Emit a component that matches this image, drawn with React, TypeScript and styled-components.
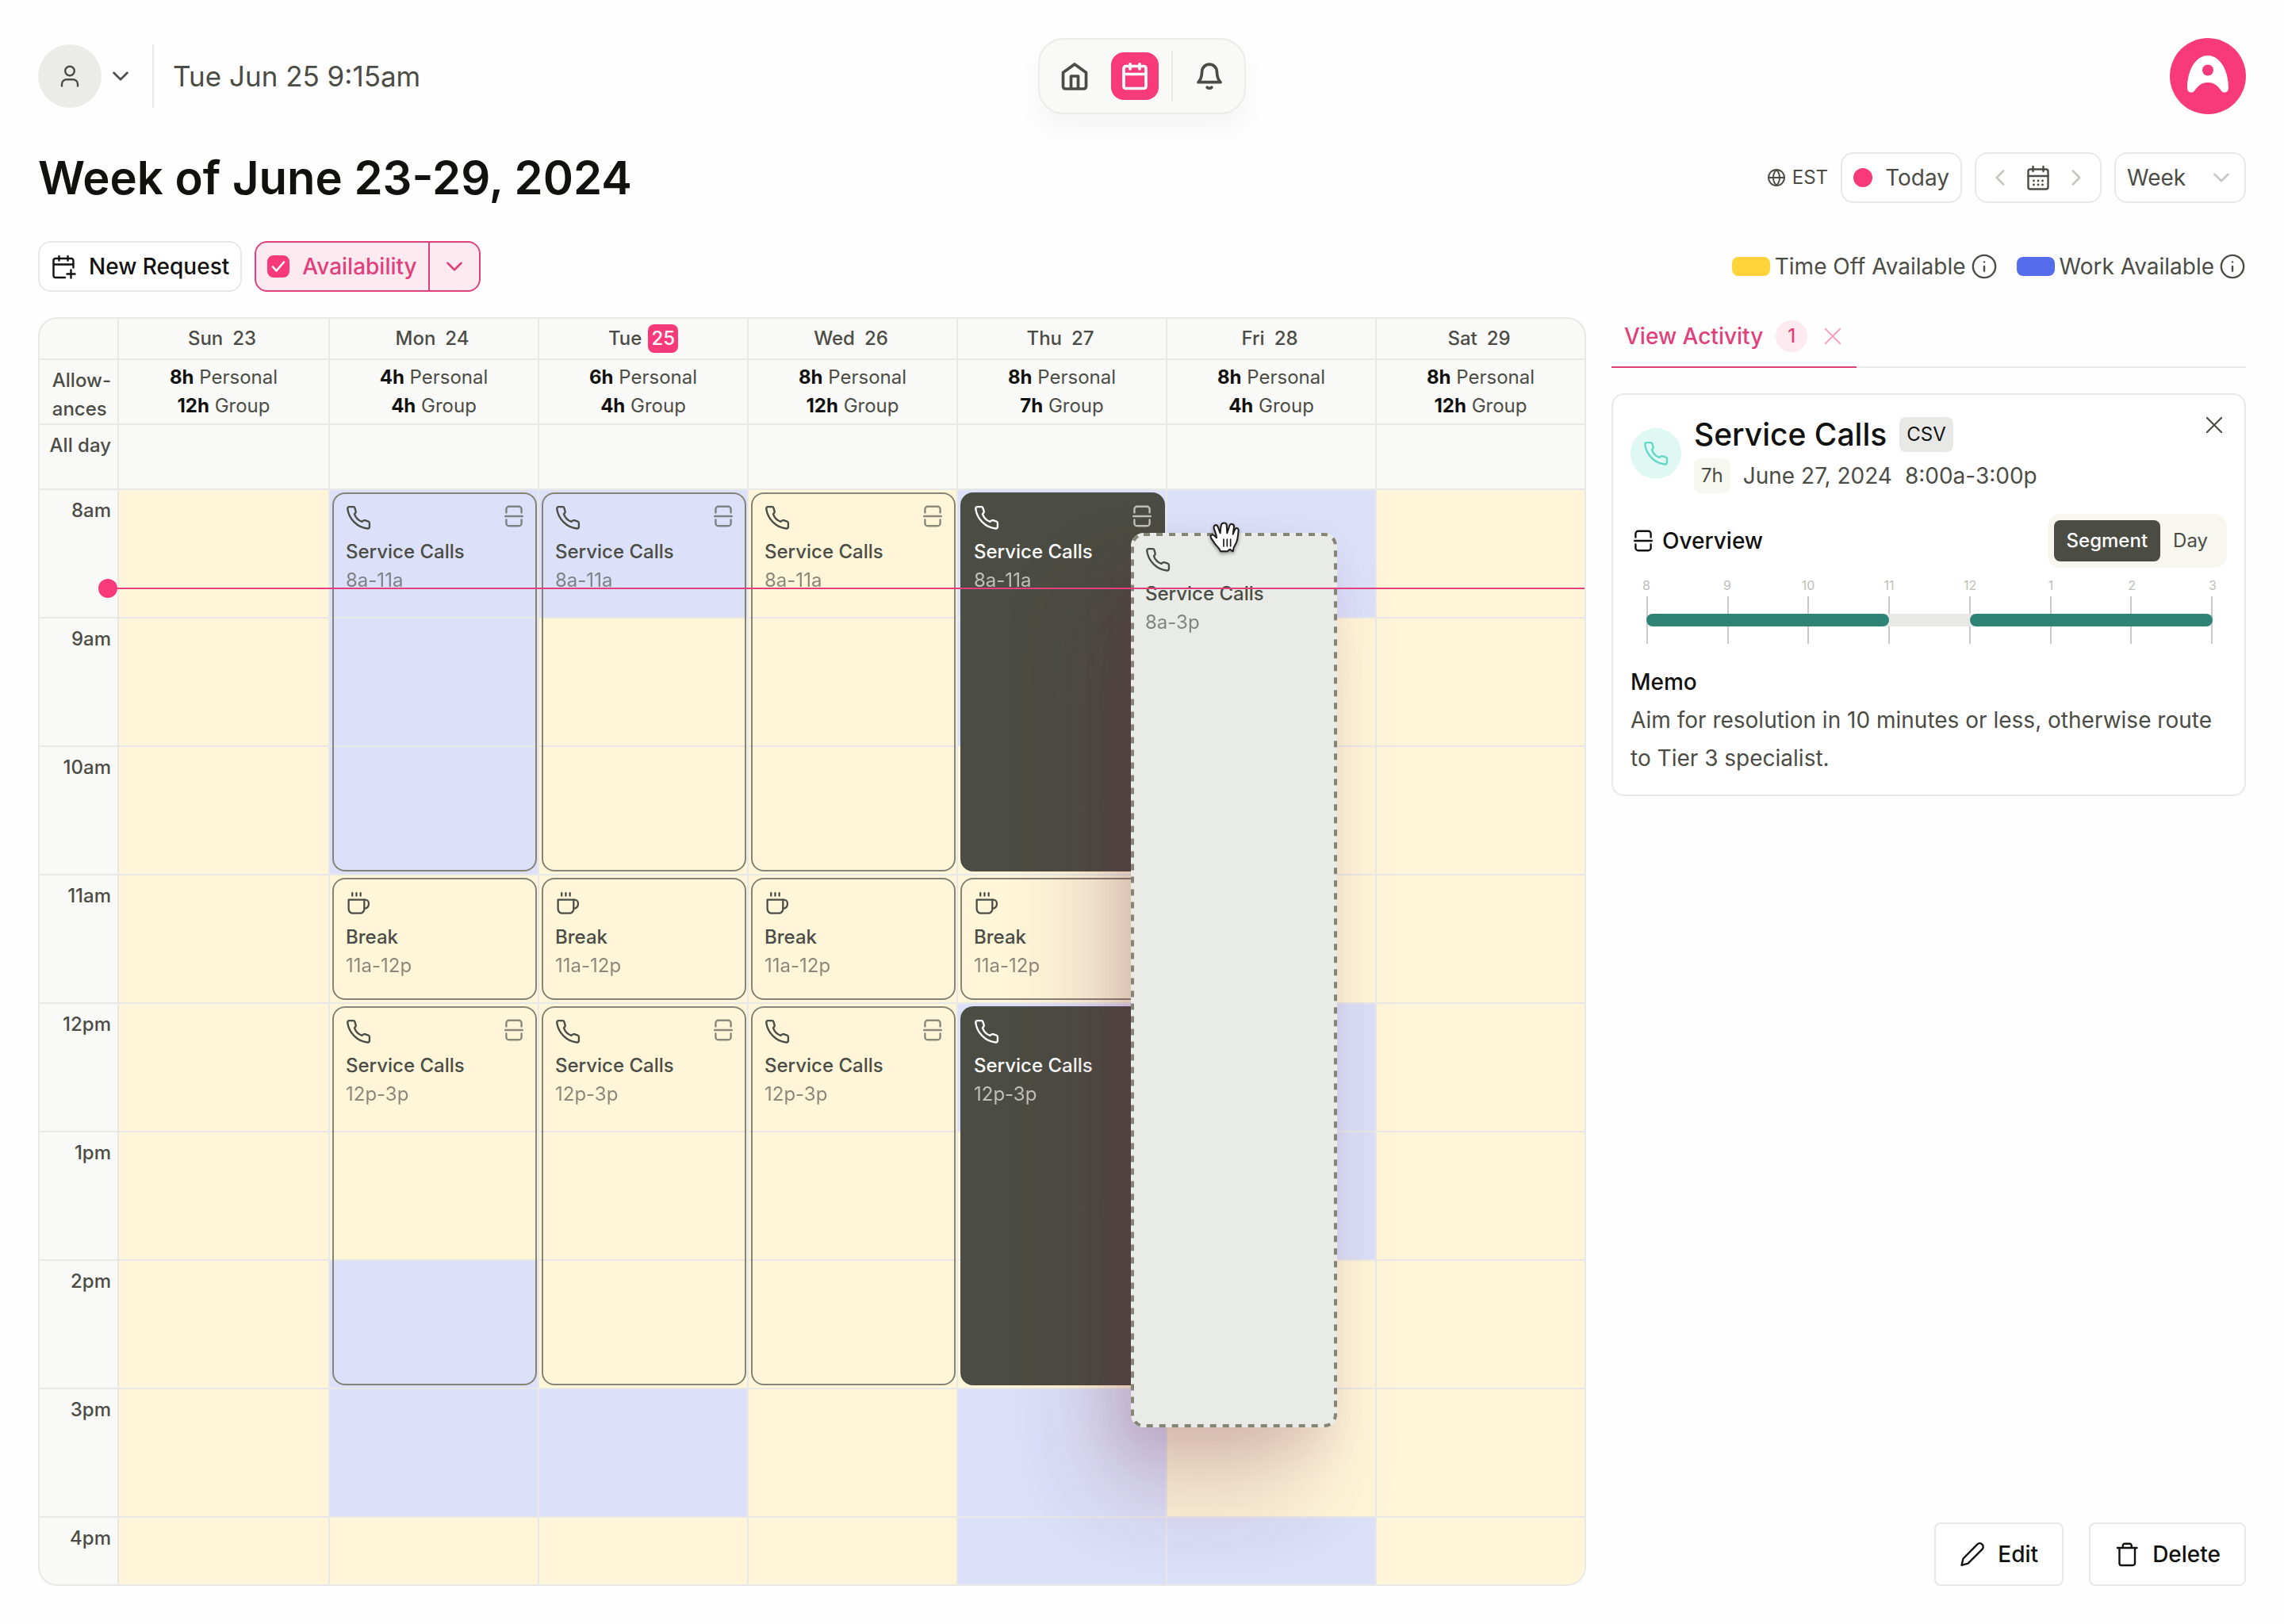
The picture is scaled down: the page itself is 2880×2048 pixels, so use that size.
import React, { useState } from 'react';
import styled, { createGlobalStyle, css } from 'styled-components';
import { ChevronDown, ChevronLeft, ChevronRight, Globe, Info } from 'lucide-react';

const c = {
  ink: '#111110',
  text: '#4b4c45',
  muted: '#868476',
  faint: '#c6c7c3',
  line: '#e8e9e6',
  surface: '#f9f9f7',
  pink: '#f93a7a',
  pinkDeep: '#e0417c',
  pinkSoft: '#fdeaf1',
  yellow: '#fff5d9',
  blue: '#dce0f9',
  dark: '#4b4c43',
};
const medium = 500;

const GlobalStyle = createGlobalStyle`
  *, *::before, *::after { box-sizing: border-box; }
  body { margin: 0; background: #fefefe; color: ${c.text}; font-family: Inter, "Liberation Sans", sans-serif; font-size: 28px; line-height: 36px; }
  button, input, select { font: inherit; color: inherit; margin: 0; }
  button { background: none; border: 0; padding: 0; cursor: pointer; }
  h1, h2, h3, p { margin: 0; }
  svg { display: block; flex: none; }
`;

/* ---------- icons ---------- */

const Stroke = styled.svg.attrs({ fill: 'none', stroke: 'currentColor', strokeLinecap: 'round', strokeLinejoin: 'round', 'aria-hidden': true })``;

const PhoneIcon = () => (
  <Stroke width="32" height="32" viewBox="0.5 0.5 23 23" strokeWidth="1.7">
    <path d="M3.6 2h3.7a1.4 1.4 0 0 1 1.4 1l.9 3.2a1.5 1.5 0 0 1-.3 1.3l-.9 1.1c1 3 3.7 5.8 6.8 6.9l1.3-1a1.4 1.4 0 0 1 1.3-.2l3.3 1.1a1.4 1.4 0 0 1 .9 1.3v3.5a1.5 1.5 0 0 1-1.7 1.5C11 20.8 3.2 13 2.1 3.6A1.5 1.5 0 0 1 3.6 2z" />
  </Stroke>
);
const CupIcon = () => (
  <Stroke width="32" height="32" viewBox="0 0 24 24" strokeWidth="1.7">
    <path d="M2.7 8.8h14.8v8.7a4 4 0 0 1-4 4H6.7a4 4 0 0 1-4-4z" />
    <path d="M17.5 8.8h.9a3.3 3.3 0 0 1 3.3 3.3v.9a4 4 0 0 1-4 4" />
    <path d="M6.2 2.4V5M10.1 2.4V5M14 2.4V5" />
  </Stroke>
);
const SplitIcon = () => (
  <Stroke width="24" height="28" viewBox="0 0 24 28" strokeWidth="2.4">
    <path d="M2.4 9.500V5a3.200 3.200 0 0 1 3.200-3.200h12.800A3.200 3.200 0 0 1 21.600 5v4.500M1.200 14h21.600M2.400 18.500V23a3.200 3.200 0 0 0 3.200 3.200h12.800a3.200 3.200 0 0 0 3.200-3.200v-4.500" />
  </Stroke>
);
const UserIcon = () => (
  <Stroke width="32" height="32" viewBox="0 0 32 32" strokeWidth="2.400">
    <circle cx="16" cy="9.500" r="5.800" />
    <path d="M6 28.500v-2.300a6 6 0 0 1 6-6h8a6 6 0 0 1 6 6v2.300" />
  </Stroke>
);
const HomeIcon = () => (
  <Stroke width="40" height="40" viewBox="0 0 40 40" strokeWidth="3.700">
    <path d="M5.500 15.500 20 5l14.500 10.500V33a3 3 0 0 1-3 3h-23a3 3 0 0 1-3-3z" />
    <path d="M15.500 35.500V20h9v15.500" />
  </Stroke>
);
const CalendarIcon = () => (
  <Stroke width="40" height="40" viewBox="0 0 40 40" strokeWidth="3.700">
    <rect x="6" y="7.500" width="28" height="28" rx="2.500" />
    <path d="M6 17.500h28M14 4.800v6M26 4.800v6" />
  </Stroke>
);
const BellIcon = () => (
  <Stroke width="40" height="40" viewBox="0 0 40 40" strokeWidth="3.700">
    <path d="M10.600 14.500a9.400 9.400 0 0 1 18.800 0c.2 5.500 1.400 10 4.600 13.200H6c3.200-3.200 4.400-7.700 4.600-13.200z" />
    <path d="M17.200 34.200a3.200 2 0 0 0 5.600 0" />
  </Stroke>
);
const CalendarPlusIcon = () => (
  <Stroke width="32" height="32" viewBox="0 0 32 32" strokeWidth="2.400">
    <path d="M28.500 17.500V8.500A2.500 2.500 0 0 0 26 6H6a2.500 2.500 0 0 0-2.500 2.500V27.500A2.500 2.500 0 0 0 6 30h12M3.500 13.500h25M10.500 3v5.500M21.500 3v5.500M25.500 20.500v10M20.500 25.500h10" />
  </Stroke>
);
const MonthIcon = () => (
  <Stroke width="32" height="32" viewBox="0 0 32 32" strokeWidth="2.400">
    <rect x="3.500" y="5.500" width="25" height="25" rx="2.500" />
    <path d="M3.500 14h25M9.500 2v6M22.500 2v6" />
    <path strokeWidth="2.800" d="M10.500 20h.01M16 20h.01M21.500 20h.01M10.500 25h.01M16 25h.01M21.500 25h.01" />
  </Stroke>
);
const PencilIcon = () => (
  <Stroke width="32" height="32" viewBox="0 0 32 32" strokeWidth="2.400">
    <path d="m2.500 29.800 2-8.300L22.200 3.600a4.300 4.300 0 0 1 6.200 6.200L10.600 27.600z" />
  </Stroke>
);
const TrashIcon = () => (
  <Stroke width="32" height="32" viewBox="0 0 32 32" strokeWidth="2.400">
    <path d="M4 8h24.500M6.500 8v19.500A2.500 2.500 0 0 0 9 30h14.500a2.500 2.500 0 0 0 2.500-2.500V8M10.800 7.500V5.200A2.500 2.500 0 0 1 13.300 2.700h5.900a2.500 2.500 0 0 1 2.500 2.500v2.300" />
  </Stroke>
);
const CheckIcon = () => (
  <Stroke width="28" height="28" viewBox="0 0 28 28" strokeWidth="2.600">
    <path d="m7 14.500 4.500 5L21 8.500" />
  </Stroke>
);
const CloseIcon = () => (
  <Stroke width="24" height="24" viewBox="0 0 24 24" strokeWidth="2.200">
    <path d="m3 3 18 18M21 3 3 21" />
  </Stroke>
);
const LogoMark = () => (
  <svg width="96" height="96" viewBox="0 0 96 96" role="img" aria-label="Home page">
    <circle cx="48" cy="48" r="48" fill={c.pink} />
    <path fill="#fff" d="M22 63C22 41 32.500 22 48 22s26 19 26 41c0 6-6.500 7.500-9.500 3C60 60 56 56 48 56s-12 4-16.500 10c-3 4.500-9.500 3-9.500-3z" />
    <circle cx="48" cy="40.500" r="7" fill={c.pink} />
  </svg>
);
const HandIcon = () => (
  <svg width="38" height="42" viewBox="0 0 114 126" aria-hidden="true">
    <path
      fill="#fff"
      stroke="#1c1c1c"
      strokeWidth="6"
      strokeLinejoin="round"
      d="M42 112C38 98 28 94 20 82 14 72 8 66 5 58c-2-8 8-12 14-5l8 8C27 46 20 36 17 24c-2-12 11-16 15-5l9 24c1-12 1-20 4-32 3-9 18-9 20 0l2 32c3-10 6-18 9-28 4-11 18-7 17 4l-4 28c3-8 5-12 8-18 4-8 14-5 13 4-2 14-1 28-8 46-6 10-11 14-13 33l-12-8-9 8z"
    />
    <path stroke="#1c1c1c" strokeWidth="5" strokeLinecap="round" d="M54 66v27M67 66v27M80 66v27" />
  </svg>
);

/* ---------- shell ---------- */

const Page = styled.div`
  display: flex;
  flex-direction: column;
  height: 100vh;
  min-width: 1600px;
  padding: 48px;
`;
const TopBar = styled.header`
  display: grid;
  grid-template-columns: 1fr auto 1fr;
  align-items: center;
`;
const Account = styled.div`
  display: flex;
  align-items: center;
`;
const Avatar = styled.button`
  display: grid;
  place-items: center;
  width: 80px;
  height: 80px;
  border-radius: 50%;
  background: #ebebe8;
`;
const IconButton = styled.button<{ $size?: number; $tone?: string }>`
  display: grid;
  place-items: center;
  width: ${(p) => p.$size ?? 48}px;
  height: ${(p) => p.$size ?? 48}px;
  color: ${(p) => p.$tone ?? c.text};
`;
const Clock = styled.time`
  margin-left: 16px;
  padding-left: 24px;
  border-left: 2px solid ${c.line};
  font-size: 35px;
  line-height: 80px;
`;
const MainNav = styled.nav`
  display: flex;
  align-items: center;
  gap: 16px;
  height: 96px;
  padding: 0 14px;
  border: 2px solid #ebebe8;
  border-radius: 32px;
  background: ${c.surface};
  box-shadow: 0 20px 32px rgba(0, 0, 0, 0.04);
`;
const NavItem = styled.button<{ $active?: boolean }>`
  display: grid;
  place-items: center;
  width: 60px;
  height: 60px;
  border-radius: 16px;
  ${(p) => p.$active && css`background: ${c.pink}; color: #fff;`}
`;
const NavRule = styled.span`
  width: 2px;
  height: 64px;
  background: ${c.line};
`;
const LogoLink = styled.a`
  justify-self: end;
`;

/* ---------- heading and tools ---------- */

const Bar = styled.div`
  display: flex;
  align-items: center;
  justify-content: space-between;
  min-height: 64px;
  margin-top: 48px;
`;
const Group = styled.div<{ $gap?: number }>`
  display: flex;
  align-items: center;
  gap: ${(p) => p.$gap ?? 16}px;
`;
const Title = styled.h1`
  color: ${c.ink};
  font-size: 58px;
  line-height: 64px;
  font-weight: 600;
`;
const outlined = css`
  height: 64px;
  border: 2px solid ${c.line};
  border-radius: 16px;
  background: #fff;
`;
const ToolButton = styled.button<{ $strong?: boolean }>`
  ${outlined}
  display: flex;
  align-items: center;
  gap: 16px;
  padding: 0 14px;
  ${(p) => p.$strong && css`color: ${c.ink}; font-weight: ${medium};`}
`;
const TodayDot = styled.span`
  width: 24px;
  height: 24px;
  border-radius: 50%;
  background: ${c.pink};
`;
const Zone = styled.span`
  display: flex;
  align-items: center;
  gap: 8px;
  font-size: 24px;
`;
const Stepper = styled.div`
  ${outlined}
  display: flex;
  align-items: center;
  padding: 0 6px;
`;
const SelectBox = styled.label`
  ${outlined}
  display: grid;
  align-items: center;
  width: 166px;
  > * { grid-area: 1 / 1; }
  > svg { justify-self: end; margin-right: 12px; color: ${c.faint}; pointer-events: none; z-index: 1; }
`;
const Select = styled.select`
  width: 100%;
  height: 60px;
  padding: 0 14px;
  border: 0;
  border-radius: 16px;
  background: transparent;
  appearance: none;
`;
const SplitControl = styled.div`
  display: flex;
  height: 64px;
  border: 2px solid ${c.pinkDeep};
  border-radius: 16px;
  background: ${c.pinkSoft};
  color: ${c.pinkDeep};
`;
const CheckLabel = styled.label`
  display: flex;
  align-items: center;
  gap: 16px;
  padding: 0 14px;
  font-weight: ${medium};
`;
const CheckBox = styled.span`
  display: grid;
  color: #fff;
  > * { grid-area: 1 / 1; }
  > svg { pointer-events: none; z-index: 1; }
`;
const Tick = styled.input`
  width: 28px;
  height: 28px;
  border: 2px solid ${c.pink};
  border-radius: 8px;
  appearance: none;
  &:checked { background: ${c.pink}; }
`;
const SplitMore = styled.button`
  display: grid;
  place-items: center;
  width: 64px;
  border-left: 2px solid ${c.pinkDeep};
`;
const LegendItem = styled.span`
  display: flex;
  align-items: center;
  gap: 6px;
`;
const Swatch = styled.span<{ $color: string }>`
  width: 48px;
  height: 24px;
  border-radius: 8px;
  background: ${(p) => p.$color};
`;

/* ---------- calendar ---------- */

const Workspace = styled.main`
  display: grid;
  grid-template-columns: minmax(0, 61fr) minmax(0, 25fr);
  gap: 32px;
  flex: 1;
  min-height: 0;
  margin-top: 32px;
`;
const Calendar = styled.section`
  display: flex;
  flex-direction: column;
  min-height: 0;
  overflow: hidden;
  border: 2px solid ${c.line};
  border-radius: 24px;
  background: ${c.surface};
  font-size: 24px;
`;
const Row = styled.div<{ $height?: number }>`
  display: grid;
  grid-template-columns: 100px repeat(7, minmax(0, 1fr));
  flex: none;
  ${(p) => p.$height && css`height: ${p.$height}px; border-bottom: 2px solid ${c.line};`}
`;
const Side = styled.div`
  border-right: 2px solid ${c.line};
`;
const Cell = styled.div`
  border-left: 2px solid ${c.line};
  ${Side} + & { border-left: 0; }
`;
const DayHead = styled(Cell)`
  display: flex;
  align-items: center;
  justify-content: center;
  gap: 8px;
  font-weight: ${medium};
`;
const DayNumber = styled.span<{ $today?: boolean }>`
  padding: 0 4px;
  border-radius: 8px;
  ${(p) => p.$today && css`background: ${c.pink}; color: #fff;`}
`;
const Allowance = styled(Cell)`
  padding-top: 4px;
  text-align: center;
  b { color: ${c.ink}; font-weight: 700; }
`;
const SideLabel = styled.div<{ $hour?: boolean }>`
  display: flex;
  justify-content: flex-end;
  padding: 8px 8px 0 0;
  font-weight: ${medium};
  ${(p) => p.$hour && css`height: 162px; border-bottom: 2px solid ${c.line};`}
`;
const Body = styled(Row)`
  position: relative;
`;
const DayColumn = styled(Cell)`
  position: relative;
  display: grid;
  grid-template-rows: repeat(9, 162px);
  grid-template-columns: minmax(0, 1fr);
`;
const Slot = styled.div<{ $row: number; $work: boolean }>`
  grid-area: ${(p) => p.$row} / 1;
  border-bottom: 2px solid ${c.line};
  background: ${(p) => (p.$work ? c.blue : c.yellow)};
`;
const Event = styled.article<{ $row: number; $span: number; $dark: boolean }>`
  grid-area: ${(p) => p.$row} / 1 / span ${(p) => p.$span};
  z-index: 1;
  margin: 3px 1px 5px 3px;
  padding: 14px 15px;
  border: 2px solid ${(p) => (p.$dark ? c.dark : c.muted)};
  border-radius: 16px;
  ${(p) => p.$dark && css`background: ${c.dark}; color: #fff;`}
`;
const EventTop = styled.div`
  display: flex;
  align-items: flex-start;
  justify-content: space-between;
  height: 41px;
`;
const Dim = styled.div`
  opacity: 0.64;
`;
const EventName = styled.h3`
  font-size: 24px;
  font-weight: ${medium};
`;
const Ghost = styled.article`
  position: absolute;
  top: 54px;
  left: 218px;
  z-index: 2;
  width: 260px;
  height: 1128px;
  padding: 18px;
  border-radius: 16px;
  background: #e9ebe6;
  box-shadow:
    -40px 80px 120px rgba(105, 30, 65, 0.22),
    -12px 24px 50px rgba(113, 30, 70, 0.1);
`;
const DashedEdge = styled.svg`
  position: absolute;
  inset: 0;
  width: 100%;
  height: 100%;
  rect { x: 2px; y: 2px; width: calc(100% - 4px); height: calc(100% - 4px); }
`;
const Cursor = styled.span`
  position: absolute;
  top: -14px;
  left: 99px;
  filter: drop-shadow(0 2px 2px rgba(0, 0, 0, 0.4));
`;
const NowLine = styled.div`
  position: absolute;
  top: 123px;
  right: 0;
  left: 98px;
  z-index: 3;
  height: 2px;
  background: ${c.pinkDeep};
  &::before {
    content: '';
    position: absolute;
    top: -11px;
    left: -24px;
    width: 24px;
    height: 24px;
    border-radius: 50%;
    background: ${c.pink};
  }
`;

/* ---------- side panel ---------- */

const Panel = styled.aside`
  display: flex;
  flex-direction: column;
  min-height: 0;
`;
const Tabs = styled.div`
  display: flex;
  height: 64px;
  border-bottom: 2px solid ${c.line};
`;
const Tab = styled.div`
  display: flex;
  align-items: center;
  gap: 16px;
  height: 64px;
  padding: 0 14px 14px 16px;
  border-bottom: 2px solid ${c.pinkDeep};
  color: ${c.pinkDeep};
  font-weight: ${medium};
`;
const Count = styled.span`
  display: grid;
  place-items: center;
  width: 40px;
  height: 40px;
  border-radius: 50%;
  background: ${c.pinkSoft};
  font-size: 24px;
`;
const Card = styled.section`
  margin-top: 32px;
  padding: 22px;
  border: 2px solid ${c.line};
  border-radius: 16px;
  background: #fff;
`;
const CardHead = styled.div`
  display: flex;
  align-items: center;
  gap: 16px;
`;
const Disc = styled.span`
  display: grid;
  place-items: center;
  width: 64px;
  height: 64px;
  border-radius: 50%;
  background: #dff8f3;
  color: #62d8c2;
`;
const Line = styled.div<{ $height: number }>`
  display: flex;
  align-items: center;
  gap: 16px;
  height: ${(p) => p.$height}px;
`;
const CardTitle = styled.h2`
  color: ${c.ink};
  font-size: 39px;
  font-weight: ${medium};
`;
const Tag = styled.span<{ $bg: string; $ink?: boolean }>`
  padding: 4px 9px;
  border-radius: 8px;
  background: ${(p) => p.$bg};
  font-size: 24px;
  ${(p) => p.$ink && css`color: ${c.ink};`}
`;
const CloseSlot = styled.div`
  align-self: flex-start;
  margin-left: auto;
`;
const Between = styled.div`
  display: flex;
  align-items: center;
  justify-content: space-between;
  margin-top: 24px;
`;
const SubTitle = styled.h3`
  display: flex;
  align-items: center;
  gap: 12px;
  padding-left: 4px;
  color: ${c.ink};
  font-size: 28px;
  font-weight: ${medium};
`;
const Toggle = styled.div`
  display: flex;
  padding: 8px;
  border-radius: 16px;
  background: #f7f7f0;
`;
const ToggleItem = styled.button<{ $on: boolean }>`
  height: 52px;
  padding: 0 16px;
  border-radius: 8px;
  font-size: 24px;
  font-weight: ${(p) => (p.$on ? medium : 400)};
  ${(p) => p.$on && css`background: ${c.dark}; color: #fff;`}
`;
const Scale = styled.div`
  margin: 12px 18px 0 20px;
`;
const ScaleLabels = styled.div`
  display: flex;
  justify-content: space-between;
  color: #bdbeb9;
  font-size: 16px;
  line-height: 20px;
  span { display: flex; justify-content: center; width: 0; }
`;
const ScaleTrack = styled.div`
  display: grid;
  align-items: center;
  height: 60px;
  margin-top: 4px;
  > * { grid-area: 1 / 1; }
`;
const Ticks = styled.div`
  display: flex;
  justify-content: space-between;
  height: 60px;
  span { width: 2px; background: #c9cac7; }
`;
const Bars = styled.div`
  display: grid;
  grid-template-columns: 3fr 1fr 3fr;
  height: 16px;
  background: ${c.line};
  border-radius: 8px;
`;
const Filled = styled.span`
  border-radius: 8px;
  background: #2f8375;
`;
const Memo = styled.div`
  margin-top: 24px;
  line-height: 48px;
  h3 { color: ${c.ink}; font-size: 28px; font-weight: ${medium}; }
`;
const Actions = styled.div`
  display: flex;
  justify-content: flex-end;
  gap: 32px;
  margin-top: auto;
`;
const ActionButton = styled.button`
  display: flex;
  align-items: center;
  gap: 16px;
  height: 80px;
  padding: 0 30px;
  border: 2px solid ${c.line};
  border-radius: 8px;
  background: #fff;
  color: ${c.ink};
  font-weight: ${medium};
`;

/* ---------- data ---------- */

type Shift = { row: number; span: number; name: string; time: string; icon: 'phone' | 'cup'; split?: boolean; dark?: boolean };
type Day = { name: string; num: number; personal: string; group: string; work: number[]; shifts: Shift[]; today?: boolean };

const shifts = (dark = false): Shift[] => [
  { row: 1, span: 3, name: 'Service Calls', time: '8a-11a', icon: 'phone', split: true, dark },
  { row: 4, span: 1, name: 'Break', time: '11a-12p', icon: 'cup' },
  { row: 5, span: 3, name: 'Service Calls', time: '12p-3p', icon: 'phone', split: true, dark },
];

const days: Day[] = [
  { name: 'Sun', num: 23, personal: '8h', group: '12h', work: [], shifts: [] },
  { name: 'Mon', num: 24, personal: '4h', group: '4h', work: [1, 2, 3, 7, 8], shifts: shifts() },
  { name: 'Tue', num: 25, personal: '6h', group: '4h', work: [1, 8], shifts: shifts(), today: true },
  { name: 'Wed', num: 26, personal: '8h', group: '12h', work: [], shifts: shifts() },
  { name: 'Thu', num: 27, personal: '8h', group: '7h', work: [1, 2, 5, 8, 9], shifts: shifts(true) },
  { name: 'Fri', num: 28, personal: '8h', group: '4h', work: [1, 5, 6, 9], shifts: [] },
  { name: 'Sat', num: 29, personal: '8h', group: '12h', work: [], shifts: [] },
];
const hours = ['8am', '9am', '10am', '11am', '12pm', '1pm', '2pm', '3pm', '4pm'];
const scaleHours = ['8', '9', '10', '11', '12', '1', '2', '3'];

const ShiftCard = ({ shift }: { shift: Shift }) => (
  <Event $row={shift.row} $span={shift.span} $dark={!!shift.dark}>
    <EventTop>
      {shift.icon === 'phone' ? <PhoneIcon /> : <CupIcon />}
      {shift.split && <Dim><SplitIcon /></Dim>}
    </EventTop>
    <EventName>{shift.name}</EventName>
    <Dim>{shift.time}</Dim>
  </Event>
);

const DragCard = () => (
  <Ghost>
    <DashedEdge aria-hidden="true">
      <rect rx="14" fill="none" stroke={c.muted} strokeWidth="4" strokeDasharray="8 8" />
    </DashedEdge>
    <EventTop><PhoneIcon /></EventTop>
    <EventName>Service Calls</EventName>
    <Dim>8a-3p</Dim>
    <Cursor><HandIcon /></Cursor>
  </Ghost>
);

const WeekCalendar = () => (
  <Calendar aria-label="Week schedule">
    <Row $height={52}>
      <Side />
      {days.map((d) => (
        <DayHead key={d.num}>{d.name}<DayNumber $today={d.today}>{d.num}</DayNumber></DayHead>
      ))}
    </Row>
    <Row $height={82}>
      <Side><SideLabel><div>Allow-<br />ances</div></SideLabel></Side>
      {days.map((d) => (
        <Allowance key={d.num}>
          <div><b>{d.personal}</b> Personal</div>
          <div><b>{d.group}</b> Group</div>
        </Allowance>
      ))}
    </Row>
    <Row $height={82}>
      <Side><SideLabel>All day</SideLabel></Side>
      {days.map((d) => <Cell key={d.num} />)}
    </Row>
    <Body>
      <Side>{hours.map((h) => <SideLabel key={h} $hour>{h}</SideLabel>)}</Side>
      {days.map((d) => (
        <DayColumn key={d.num}>
          {hours.map((h, i) => <Slot key={h} $row={i + 1} $work={d.work.includes(i + 1)} />)}
          {d.shifts.map((s) => <ShiftCard key={s.row} shift={s} />)}
          {d.name === 'Thu' && <DragCard />}
        </DayColumn>
      ))}
      <NowLine />
    </Body>
  </Calendar>
);

const ActivityPanel = () => {
  const [view, setView] = useState('Segment');
  return (
    <Panel>
      <Tabs>
        <Tab>
          View Activity
          <Count>1</Count>
          <IconButton $size={32} $tone="#f8a3c0" aria-label="Close tab"><CloseIcon /></IconButton>
        </Tab>
      </Tabs>
      <Card>
        <CardHead>
          <Disc><PhoneIcon /></Disc>
          <div>
            <Line $height={56}>
              <CardTitle>Service Calls</CardTitle>
              <Tag $bg="#e8e9e6" $ink>CSV</Tag>
            </Line>
            <Line $height={48}>
              <Tag $bg="#f7f7f2">7h</Tag>
              <span>June 27, 2024</span>
              <span>8:00a-3:00p</span>
            </Line>
          </div>
          <CloseSlot>
            <IconButton $size={32} aria-label="Close activity"><CloseIcon /></IconButton>
          </CloseSlot>
        </CardHead>
        <Between>
          <SubTitle><SplitIcon />Overview</SubTitle>
          <Toggle>
            {['Segment', 'Day'].map((v) => (
              <ToggleItem key={v} $on={view === v} aria-pressed={view === v} onClick={() => setView(v)}>{v}</ToggleItem>
            ))}
          </Toggle>
        </Between>
        <Scale>
          <ScaleLabels>{scaleHours.map((h) => <span key={h}>{h}</span>)}</ScaleLabels>
          <ScaleTrack>
            <Ticks>{scaleHours.map((h) => <span key={h} />)}</Ticks>
            <Bars><Filled /><span /><Filled /></Bars>
          </ScaleTrack>
        </Scale>
        <Memo>
          <h3>Memo</h3>
          <p>Aim for resolution in 10 minutes or less, otherwise route to Tier 3 specialist.</p>
        </Memo>
      </Card>
      <Actions>
        <ActionButton><PencilIcon />Edit</ActionButton>
        <ActionButton><TrashIcon />Delete</ActionButton>
      </Actions>
    </Panel>
  );
};

export default function App() {
  return (
    <>
      <GlobalStyle />
      <Page>
        <TopBar>
          <Account>
            <Avatar aria-label="Account"><UserIcon /></Avatar>
            <IconButton aria-label="Switch account"><ChevronDown size={34} strokeWidth={1.8} /></IconButton>
            <Clock>Tue Jun 25 9:15am</Clock>
          </Account>
          <MainNav>
            <NavItem aria-label="Home"><HomeIcon /></NavItem>
            <NavItem aria-label="Calendar" $active><CalendarIcon /></NavItem>
            <NavRule />
            <NavItem aria-label="Notifications"><BellIcon /></NavItem>
          </MainNav>
          <LogoLink href="#"><LogoMark /></LogoLink>
        </TopBar>

        <Bar>
          <Title>Week of June 23-29, 2024</Title>
          <Group>
            <Zone><Globe size={24} strokeWidth={1.9} />EST</Zone>
            <ToolButton><TodayDot />Today</ToolButton>
            <Stepper>
              <IconButton $tone={c.faint} aria-label="Previous week"><ChevronLeft size={34} strokeWidth={1.8} /></IconButton>
              <IconButton aria-label="Pick a date"><MonthIcon /></IconButton>
              <IconButton $tone={c.faint} aria-label="Next week"><ChevronRight size={34} strokeWidth={1.8} /></IconButton>
            </Stepper>
            <SelectBox>
              <Select aria-label="Calendar view" defaultValue="Week">
                <option>Day</option>
                <option>Week</option>
                <option>Month</option>
              </Select>
              <ChevronDown size={34} strokeWidth={1.8} />
            </SelectBox>
          </Group>
        </Bar>

        <Bar>
          <Group>
            <ToolButton $strong><CalendarPlusIcon />New Request</ToolButton>
            <SplitControl>
              <CheckLabel>
                <CheckBox><Tick type="checkbox" defaultChecked /><CheckIcon /></CheckBox>
                Availability
              </CheckLabel>
              <SplitMore aria-label="Availability options"><ChevronDown size={34} strokeWidth={1.8} /></SplitMore>
            </SplitControl>
          </Group>
          <Group $gap={24}>
            <LegendItem><Swatch $color="#ffd43b" />Time Off Available<Info size={34} strokeWidth={1.7} /></LegendItem>
            <LegendItem><Swatch $color="#556dea" />Work Available<Info size={34} strokeWidth={1.7} /></LegendItem>
          </Group>
        </Bar>

        <Workspace>
          <WeekCalendar />
          <ActivityPanel />
        </Workspace>
      </Page>
    </>
  );
}
